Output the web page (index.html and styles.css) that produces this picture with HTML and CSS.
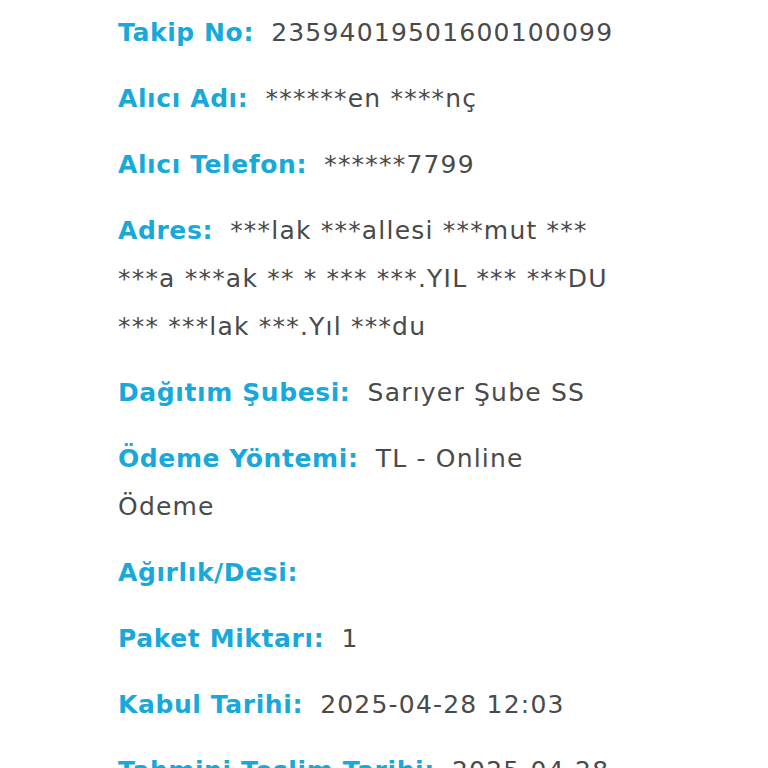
FILE: index.html
```html
<!DOCTYPE html>
<html lang="tr">
<head>
    <meta charset="UTF-8">
    <meta name="viewport" content="width=device-width, initial-scale=1.0">
    <title>Gönderi Detayı</title>
    <link rel="stylesheet" href="styles.css">
</head>
<body>
    <div class="detail-container">
        <p class="detail-row"><span class="detail-label">Takip No:</span> 23594019501600100099</p>
        <p class="detail-row"><span class="detail-label">Alıcı Adı:</span> ******en ****nç</p>
        <p class="detail-row"><span class="detail-label">Alıcı Telefon:</span> ******7799</p>
        <p class="detail-row"><span class="detail-label">Adres:</span> ***lak ***allesi ***mut *** ***a ***ak ** * *** ***.YIL *** ***DU *** ***lak ***.Yıl ***du</p>
        <p class="detail-row"><span class="detail-label">Dağıtım Şubesi:</span> Sarıyer Şube SS</p>
        <p class="detail-row"><span class="detail-label">Ödeme Yöntemi:</span> TL - Online Ödeme</p>
        <p class="detail-row"><span class="detail-label">Ağırlık/Desi:</span> </p>
        <p class="detail-row"><span class="detail-label">Paket Miktarı:</span> 1</p>
        <p class="detail-row"><span class="detail-label">Kabul Tarihi:</span> 2025-04-28 12:03</p>
        <p class="detail-row"><span class="detail-label">Tahmini Teslim Tarihi:</span> 2025-04-28</p>
    </div>
</body>
</html>
```

FILE: styles.css
```css
body {
    font-family: 'DejaVu Sans', sans-serif;
    margin: 0;
    background-color: #fff;
}
.detail-container {
    padding: 9px 140px 0 118px;
}
.detail-row {
    font-size: 25px;
    line-height: 48px;
    letter-spacing: 1.2px;
    color: #4a4a4a;
    margin: 0 0 18px 0;
}
.detail-label {
    color: #18a9da;
    font-weight: bold;
    letter-spacing: 0.6px;
    margin-right: 8px;
}
```
